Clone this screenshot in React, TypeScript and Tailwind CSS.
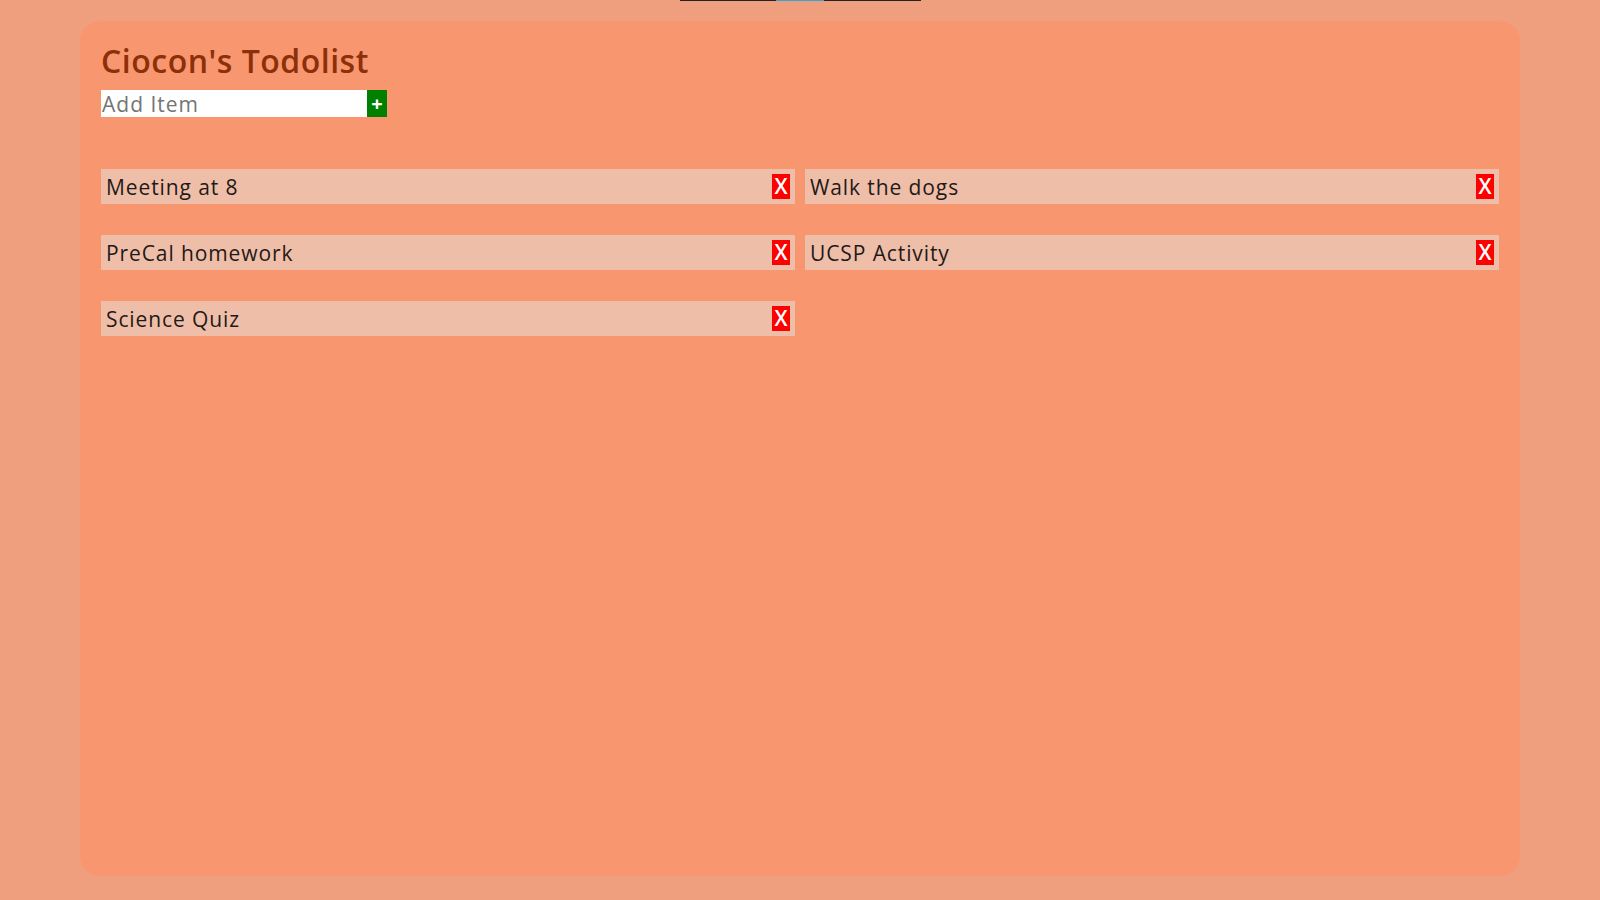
import React from "react";

const items = [
  "Meeting at 8",
  "Walk the dogs",
  "PreCal homework",
  "UCSP Activity",
  "Science Quiz",
];

const TodoItem = ({ text }: { text: string }) => (
  <div className="flex h-[35px] items-center justify-between bg-[#efbea9] pl-[5px] pr-[5px]">
    <span className="pt-[2px] text-[21px] leading-none tracking-[0.9px] text-[#1f1a17]">
      {text}
    </span>
    <button className="flex h-[25px] w-[18px] items-center justify-center bg-[#ff0000] text-[21px] font-semibold leading-none text-white">
      X
    </button>
  </div>
);

export default function App() {
  return (
    <div
      className="min-h-screen bg-[#ef9f7e] pb-[24px]"
      style={{ fontFamily: '"Open Sans", "Liberation Sans", sans-serif' }}
    >
      {/* top strip */}
      <div className="mx-auto flex h-px w-[241px] bg-[#222222]">
        <div className="ml-[96px] w-[48px] bg-[#2fa6d6]" />
      </div>

      <div className="mx-[80px] mt-[20px] h-[855px] rounded-[20px] bg-[#f8966f] px-[21px] pt-[20px]">
        <h1 className="text-[32px] font-semibold leading-[40px] tracking-[0.5px] text-[#8c300a]">
          Ciocon's Todolist
        </h1>
        <div className="mt-[9px] flex h-[27px] w-[286px]">
          <input
            placeholder="Add Item"
            className="h-full w-[266px] bg-white px-[1px] text-[21px] tracking-[1px] text-[#333] outline-none placeholder:text-[#757575]"
          />
          <button className="flex h-full w-[20px] items-center justify-center bg-[#008000] text-[20px] font-bold leading-none text-white">
            +
          </button>
        </div>

        <div className="mt-[52px] grid grid-cols-2 gap-x-[10px] gap-y-[31px]">
          {items.map((t) => (
            <TodoItem key={t} text={t} />
          ))}
        </div>
      </div>
    </div>
  );
}
